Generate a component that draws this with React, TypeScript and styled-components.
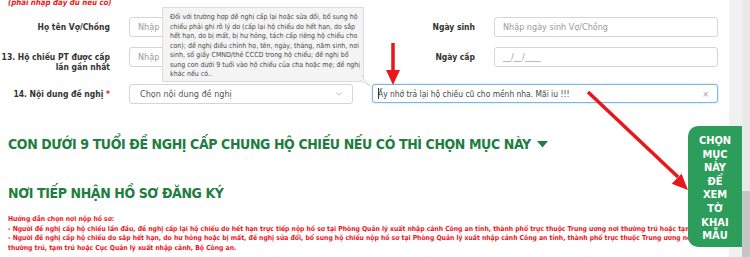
import React from 'react';
import styled, { createGlobalStyle } from 'styled-components';
import { ChevronDown } from 'lucide-react';

const FONT = '"DejaVu Sans Condensed", "DejaVu Sans", "Liberation Sans", sans-serif';

const Global = createGlobalStyle`
  html, body { margin: 0; padding: 0; background: #fff; }
  * { box-sizing: border-box; }
`;

const Page = styled.div`
  position: relative;
  display: flex;
  width: 750px;
  height: 257px;
  overflow: hidden;
  font-family: ${FONT};
  background: #f0f0f0;
`;

const Content = styled.div`
  width: 729px;
  flex: none;
  padding-left: 8px;
  background: #fff;
  overflow: hidden;
`;

const Gutter = styled.div`
  width: 13px;
  flex: none;
  background: #f1f1f1;
`;

const ScrollTrack = styled.div`
  width: 8px;
  flex: none;
  display: flex;
  flex-direction: column;
  padding-top: 191px;
  background: #e9e9e9;
`;

const ScrollThumb = styled.div`
  flex: 1;
  background: #c6c6c6;
`;

const Hint = styled.div`
  width: 102px;
  height: 8px;
  margin-top: -3px;
  text-align: right;
  font-size: 7.8px;
  line-height: 11px;
  font-weight: bold;
  font-style: italic;
  color: #e3211c;
  white-space: nowrap;
`;

const FormRow = styled.div<{ $top: number }>`
  display: flex;
  align-items: flex-start;
  margin-top: ${(p) => p.$top}px;
`;

const Label = styled.label<{ $w: number }>`
  width: ${(p) => p.$w}px;
  flex: none;
  display: flex;
  flex-direction: column;
  align-items: flex-end;
  padding: 5px 19px 0 0;
  font-size: 8.5px;
  line-height: 10px;
  font-weight: bold;
  color: #333;
  white-space: nowrap;
`;

const Star = styled.span`
  color: #e3211c;
`;

const Field = styled.div<{ $w: number; $focus?: boolean }>`
  position: relative;
  width: ${(p) => p.$w}px;
  height: ${(p) => (p.$focus ? 19 : 20)}px;
  flex: none;
  display: flex;
  align-items: center;
  padding: 0 8px 0 ${(p) => (p.$focus ? 5 : 8)}px;
  background: #fff;
  border: 1px solid ${(p) => (p.$focus ? '#7fb5e6' : '#d5d5d5')};
  border-radius: 3px;
  box-shadow: ${(p) => (p.$focus ? '0 0 2px rgba(102,175,233,0.6)' : 'none')};
  font-size: ${(p) => (p.$focus ? 8.4 : 9)}px;
  color: #444;
  white-space: nowrap;
  overflow: hidden;
`;

const Placeholder = styled.span`
  color: #9a9a9a;
`;

const SelectText = styled.span`
  flex: 1;
  color: #555;
  padding-left: 2px;
`;

const Caret = styled.span`
  width: 1px;
  height: 11px;
  margin-right: -1px;
  background: #333;
`;

const Clear = styled.span`
  margin-left: auto;
  font-size: 9px;
  color: #a0a0a0;
`;

const Heading = styled.h2<{ $top: number }>`
  margin: ${(p) => p.$top}px 0 0;
  display: flex;
  align-items: center;
  gap: 6px;
  font-size: 14px;
  letter-spacing: -0.4px;
  line-height: 20px;
  font-weight: bold;
  color: #1e7d40;
  white-space: nowrap;
`;

const Guide = styled.div`
  margin-top: 12px;
  width: 760px;
  font-size: 6.75px;
  line-height: 9.7px;
  font-weight: bold;
  color: #e8141c;
`;

const GuideLine = styled.div`
  white-space: nowrap;
`;

const Tooltip = styled.div`
  position: absolute;
  left: 162px;
  top: 7px;
  width: 202px;
  height: 75px;
  padding: 5px 0 0 7px;
  background: #f4f4f4;
  border: 1px solid #dcdcdc;
  font-size: 7px;
  line-height: 9.5px;
  color: #4a4a4a;
  white-space: nowrap;
`;

const Tail = styled.svg`
  position: absolute;
  right: -9px;
  bottom: -6px;
`;

const SideButton = styled.div`
  position: absolute;
  left: 688px;
  top: 126px;
  width: 54px;
  height: 121px;
  padding-top: 8px;
  border-radius: 10px 0 0 10px;
  background: #2d9d5b;
  color: #fff;
  font-size: 11px;
  line-height: 13.6px;
  font-weight: bold;
  text-align: center;
`;

const Arrows = styled.svg`
  position: absolute;
  left: 0;
  top: 0;
  pointer-events: none;
`;

const tipLines = [
  'Đối với trường hợp đề nghị cấp lại hoặc sửa đổi, bổ sung hộ',
  'chiếu phải ghi rõ lý do (cấp lại hộ chiếu do hết hạn, do sắp',
  'hết hạn, do bị mất, bị hư hỏng, tách cấp riêng hộ chiếu cho',
  'con); đề nghị điều chỉnh họ, tên, ngày, tháng, năm sinh, nơi',
  'sinh, số giấy CMND/thẻ CCCD trong hộ chiếu; đề nghị bổ',
  'sung con dưới 9 tuổi vào hộ chiếu của cha hoặc mẹ; đề nghị',
  'khác nếu có..',
];

const guideLines = [
  'Hướng dẫn chọn nơi nộp hồ sơ:',
  '- Người đề nghị cấp hộ chiếu lần đầu, đề nghị cấp lại hộ chiếu do hết hạn trực tiếp nộp hồ sơ tại Phòng Quản lý xuất nhập cảnh Công an tỉnh, thành phố trực thuộc Trung ương nơi thường trú hoặc tạm trú.',
  '- Người đề nghị cấp hộ chiếu do sắp hết hạn, do hư hỏng hoặc bị mất, đề nghị sửa đổi, bổ sung hộ chiếu nộp hồ sơ tại Phòng Quản lý xuất nhập cảnh Công an tỉnh, thành phố trực thuộc Trung ương nơi',
  'thường trú, tạm trú hoặc Cục Quản lý xuất nhập cảnh, Bộ Công an.',
];

const App = () => {
  return (
    <Page>
      <Global />
      <Content>
        <Hint>(phải nhập đầy đủ nếu có)</Hint>

        <FormRow $top={12}>
          <Label $w={121}>Họ tên Vợ/Chồng</Label>
          <Field $w={224}>
            <Placeholder>Nhập họ tên Vợ/Chồng</Placeholder>
          </Field>
          <Label $w={141}>Ngày sinh</Label>
          <Field $w={224}>
            <Placeholder>Nhập ngày sinh Vợ/Chồng</Placeholder>
          </Field>
        </FormRow>

        <FormRow $top={10}>
          <Label $w={121}>
            <span>13. Hộ chiếu PT được cấp</span>
            <span>lần gần nhất</span>
          </Label>
          <Field $w={224}>
            <Placeholder>Nhập số hộ chiếu</Placeholder>
          </Field>
          <Label $w={141}>Ngày cấp</Label>
          <Field $w={224}>
            <Placeholder>__/__/____</Placeholder>
          </Field>
        </FormRow>

        <FormRow $top={12}>
          <Label $w={121}>
            <span>
              14. Nội dung đề nghị <Star>*</Star>
            </span>
          </Label>
          <Field $w={224}>
            <SelectText>Chọn nội dung đề nghị</SelectText>
            <ChevronDown size={10} color="#9a9a9a" strokeWidth={1.5} />
          </Field>
          <Field $w={346} $focus style={{ marginLeft: 19 }}>
            <Caret />
            Ấy nhớ trả lại hộ chiếu cũ cho mềnh nha. Mãi iu !!!
            <Clear>×</Clear>
          </Field>
        </FormRow>

        <Heading $top={30}>
          CON DƯỚI 9 TUỔI ĐỀ NGHỊ CẤP CHUNG HỘ CHIẾU NẾU CÓ THÌ CHỌN MỤC NÀY
          <svg width="11" height="7" viewBox="0 0 11 7">
            <polygon points="0,0 11,0 5.5,6.5" fill="#1e7d40" />
          </svg>
        </Heading>

        <Heading $top={29}>NƠI TIẾP NHẬN HỒ SƠ ĐĂNG KÝ</Heading>

        <Guide>
          {guideLines.map((l) => (
            <GuideLine key={l}>{l}</GuideLine>
          ))}
        </Guide>
      </Content>
      <Gutter />
      <ScrollTrack>
        <ScrollThumb />
      </ScrollTrack>

      <Tooltip>
        {tipLines.map((l) => (
          <div key={l}>{l}</div>
        ))}
        <Tail width="12" height="12" viewBox="0 0 12 12">
          <polygon points="0,0 10,11 0,5" fill="#f4f4f4" />
          <polyline points="1,0 10,11 0,5" fill="none" stroke="#dcdcdc" strokeWidth="1" />
        </Tail>
      </Tooltip>

      <SideButton>
        CHỌN
        <br />
        MỤC
        <br />
        NÀY
        <br />
        ĐỂ
        <br />
        XEM
        <br />
        TỜ
        <br />
        KHAI
        <br />
        MẪU
      </SideButton>

      <Arrows width="750" height="257" viewBox="0 0 750 257">
        <line x1="393" y1="43" x2="393" y2="72" stroke="#e8171b" strokeWidth="3.5" />
        <polygon points="386,70 400,70 393,85" fill="#e8171b" />
        <line x1="588" y1="92" x2="678" y2="177" stroke="#e8171b" strokeWidth="3.5" />
        <polygon points="671.7,183.8 681.5,173.8 688,190" fill="#e8171b" />
      </Arrows>
    </Page>
  );
};

export default App;
